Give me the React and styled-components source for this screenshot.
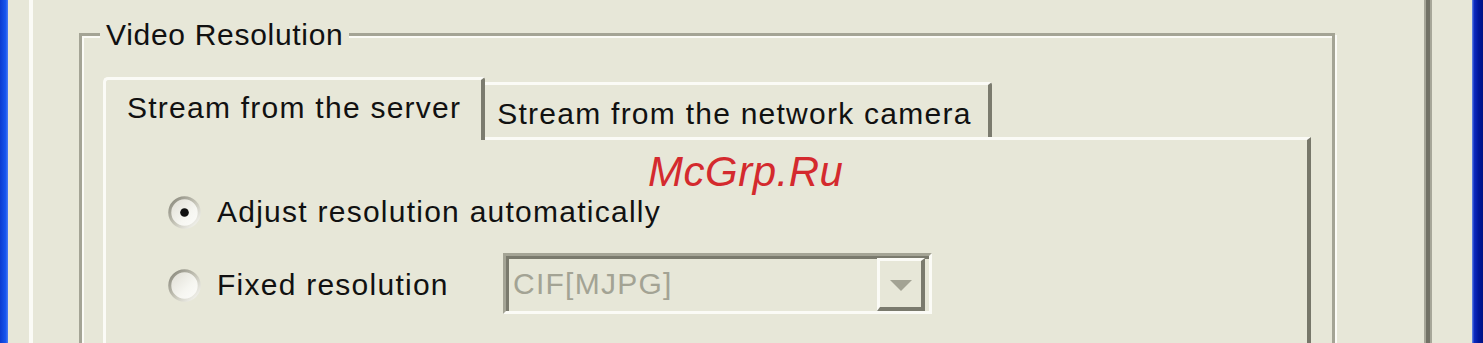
import React from "react";
import styled, { createGlobalStyle } from "styled-components";

const BG = "#e7e7d8";
const LIGHT = "#fbfbf6";
const GRAY = "#a4a495";

const GlobalStyle = createGlobalStyle`
  html, body { margin: 0; padding: 0; background: ${BG}; }
  #root { height: 343px; overflow: hidden; }
`;

const Window = styled.div`
  position: relative;
  display: flex;
  height: 343px;
  overflow: hidden;
  background: ${BG};
  font-family: "Liberation Sans", Arial, sans-serif;
  font-size: 30px;
  letter-spacing: 1.25px;
  color: #111;
`;

const FrameEdge = styled.div`
  flex: none;
  width: ${p => p.$width}px;
  background: ${p =>
    p.$side === "left"
      ? "linear-gradient(to right, #0a3bd0, #1656ee 70%, #4a7cf4)"
      : "linear-gradient(to right, #6a8fe8, #0d2bc0 20%, #00179c 60%, #001283)"};
`;

const Client = styled.div`
  flex: 1;
  display: flex;
  padding: 0 42px 0 21px;
`;

const OuterPanel = styled.div`
  flex: 1;
  border-left: 4px solid ${LIGHT};
  border-right: 4px solid #727266;
  box-shadow: 2px 0 0 #a7a799, inset -2px 0 0 #a7a799;
  padding: 17px 91px 0 46px;
`;

const GroupBox = styled.fieldset`
  margin: 0;
  min-width: 0;
  border: 3px solid ${GRAY};
  box-shadow: inset 2px 2px 0 ${LIGHT}, 2px 2px 0 ${LIGHT};
  padding: 26px 21px 0 21px;
  height: 400px;
`;

const Legend = styled.legend`
  margin-left: -3px;
  padding: 0 6px;
  line-height: 34px;
  letter-spacing: 0.7px;
  background: ${BG};
  position: relative;
  top: 1px;
`;

const TabStrip = styled.div`
  display: flex;
  align-items: flex-end;
`;

const Tab = styled.div`
  position: relative;
  z-index: ${p => (p.$active ? 1 : 0)};
  background: ${BG};
  line-height: 34px;
  white-space: nowrap;
  border-top: 3px solid ${LIGHT};
  border-right: 4px solid #7b7b6e;
  border-left: ${p => (p.$active ? `3px solid ${LIGHT}` : "none")};
  border-top-left-radius: ${p => (p.$active ? "5px" : "0")};
  border-top-right-radius: 3px;
  padding: ${p => (p.$active ? "11px 20px 15px 21px" : "12px 16px 6px 12px")};
  margin-bottom: ${p => (p.$active ? "-3px" : "0")};
`;

const TabPanel = styled.div`
  border-top: 3px solid ${LIGHT};
  border-left: 3px solid ${LIGHT};
  border-right: 4px solid #77776a;
  height: 300px;
  padding: 52px 0 0 62px;
  display: flex;
  flex-direction: column;
  gap: 21px;
`;

const OptionRow = styled.div`
  display: flex;
  align-items: center;
  height: ${p => p.$height}px;
`;

const RadioMark = styled.svg`
  flex: none;
  width: 33px;
  height: 33px;
  margin-top: ${p => p.$shift || 0}px;
`;

const Label = styled.span`
  margin-left: 16px;
  width: ${p => (p.$width ? `${p.$width}px` : "auto")};
  line-height: 34px;
  white-space: nowrap;
  margin-top: ${p => p.$shift || 0}px;
`;

const Combo = styled.div`
  box-sizing: border-box;
  width: 429px;
  height: 61px;
  display: flex;
  align-items: flex-start;
  justify-content: space-between;
  border-top: 3px solid ${GRAY};
  border-left: 3px solid ${GRAY};
  border-right: 3px solid ${LIGHT};
  border-bottom: 3px solid ${LIGHT};
  box-shadow: inset 3px 3px 0 #7a7a6d;
  padding: 2px 4px 0 7px;
`;

const ComboText = styled.span`
  color: #a3a394;
  line-height: 34px;
  padding-top: 9px;
`;

const ComboButton = styled.div`
  box-sizing: border-box;
  width: 48px;
  height: 53px;
  display: flex;
  align-items: center;
  justify-content: center;
  border-top: 3px solid ${LIGHT};
  border-left: 3px solid ${LIGHT};
  border-right: 4px solid #7a7a6d;
  border-bottom: 4px solid #7a7a6d;
  padding-top: 2px;
`;

const Arrow = styled.div`
  width: 0;
  height: 0;
  border-left: 11px solid transparent;
  border-right: 11px solid transparent;
  border-top: 11px solid #a3a394;
`;

const Watermark = styled.div`
  position: absolute;
  left: 648px;
  top: 151px;
  font-size: 42px;
  line-height: 42px;
  font-style: italic;
  letter-spacing: 0.5px;
  color: #d42a2e;
  pointer-events: none;
`;

function Radio({ checked, shift }) {
  return (
    <RadioMark viewBox="0 0 13 13" $shift={shift}>
      <defs>
        <linearGradient id="ring" x1="0" y1="0" x2="1" y2="1">
          <stop offset="0" stopColor="#858478" />
          <stop offset="0.5" stopColor="#c4c3b6" />
          <stop offset="1" stopColor="#fbfbf7" />
        </linearGradient>
        <linearGradient id="fill" x1="0" y1="0" x2="1" y2="1">
          <stop offset="0" stopColor="#dedcd2" />
          <stop offset="0.6" stopColor="#f6f6f1" />
          <stop offset="1" stopColor="#fdfdfb" />
        </linearGradient>
      </defs>
      <circle cx="6.5" cy="6.5" r="5.8" fill="url(#fill)" stroke="url(#ring)" strokeWidth="1.2" />
      {checked && <circle cx="6.5" cy="6.5" r="1.7" fill="#111" />}
    </RadioMark>
  );
}

export default function App() {
  return (
    <Window>
      <GlobalStyle />
      <FrameEdge $side="left" $width={8} />
      <Client>
        <OuterPanel>
          <GroupBox>
            <Legend>Video Resolution</Legend>
            <TabStrip>
              <Tab $active>Stream from the server</Tab>
              <Tab>Stream from the network camera</Tab>
            </TabStrip>
            <TabPanel>
              <OptionRow $height={40}>
                <Radio checked />
                <Label>Adjust resolution automatically</Label>
              </OptionRow>
              <OptionRow $height={61}>
                <Radio shift={3} />
                <Label $width={286} $shift={3}>Fixed resolution</Label>
                <Combo>
                  <ComboText>CIF[MJPG]</ComboText>
                  <ComboButton>
                    <Arrow />
                  </ComboButton>
                </Combo>
              </OptionRow>
            </TabPanel>
          </GroupBox>
        </OuterPanel>
      </Client>
      <FrameEdge $side="right" $width={11} />
      <Watermark>McGrp.Ru</Watermark>
    </Window>
  );
}
